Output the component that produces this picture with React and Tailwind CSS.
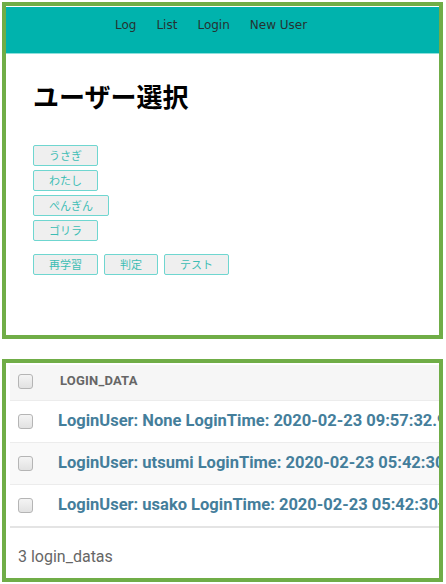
import React from 'react';

const users = ['うさぎ', 'わたし', 'ぺんぎん', 'ゴリラ'];
const actions = ['再学習', '判定', 'テスト'];
// only the part that fits the panel is shown in the capture
const rows = [
  'LoginUser: None LoginTime: 2020-02-23 09:57:32.9',
  'LoginUser: utsumi LoginTime: 2020-02-23 05:42:30+',
  'LoginUser: usako LoginTime: 2020-02-23 05:42:30+',
];

const Btn = ({ label }) => (
  <button className="h-[21px] px-[15px] bg-[#efefef] border border-[#6fd6d0] rounded-[2px] text-[11px] leading-none text-[#3cbdb4] font-['Noto_Sans_CJK_JP',sans-serif]">
    {label}
  </button>
);

const Check = () => (
  <div className="w-[15px] h-[15px] rounded-[3px] border border-[#b5b5b5] bg-gradient-to-b from-[#f4f4f4] to-[#e2e2e2] shrink-0" />
);

export default function App() {
  return (
    <div className="w-[446px] h-[584px] bg-white p-[2px] overflow-hidden">
      {/* top panel */}
      <div className="w-[441px] h-[337px] border-4 border-[#70ad47] pt-px overflow-hidden">
        <nav className="h-[47px] bg-[#00b3ad] border-b border-[#8ee0dc] flex items-start pt-[9px] pl-[109px] gap-[20px] text-[12px] text-[#263231] font-['DejaVu_Sans',sans-serif]">
          <span>Log</span>
          <span>List</span>
          <span>Login</span>
          <span>New User</span>
        </nav>
        <div className="pl-[27px] pt-[29px]">
          <h1 className="text-[26px] font-bold text-black leading-none font-['Noto_Sans_CJK_JP',sans-serif] mb-[36px]">
            ユーザー選択
          </h1>
          <div className="flex flex-col items-start gap-[4px]">
            {users.map((u) => (
              <Btn key={u} label={u} />
            ))}
          </div>
          <div className="flex gap-[6px] mt-[13px]">
            {actions.map((a) => (
              <Btn key={a} label={a} />
            ))}
          </div>
        </div>
      </div>

      {/* bottom panel */}
      <div className="mt-[20px] w-[441px] h-[223px] border-4 border-[#70ad47] pt-[2px] pl-[4px] overflow-hidden font-['Roboto',sans-serif]">
        <div className="h-[35px] bg-[#f6f6f6] flex items-center pl-[8px] gap-[27px] pb-[3px]">
          <Check />
          <span className="text-[13px] font-bold text-[#666] tracking-[0.2px]">LOGIN_DATA</span>
        </div>
        {rows.map((r, i) => (
          <div
            key={r}
            className={`h-[42px] flex items-center pl-[8px] gap-[25px] border-t border-[#ececec] whitespace-nowrap ${
              i === 1 ? 'bg-[#f9f9f9]' : 'bg-white'
            }`}
          >
            <Check />
            <span className="text-[16.5px] font-bold text-[#447e9b]">{r}</span>
          </div>
        ))}
        <div className="border-t-2 border-[#e4e4e4] pt-[17px] pl-[8px] text-[16px] text-[#666]">
          3 login_datas
        </div>
      </div>
    </div>
  );
}
